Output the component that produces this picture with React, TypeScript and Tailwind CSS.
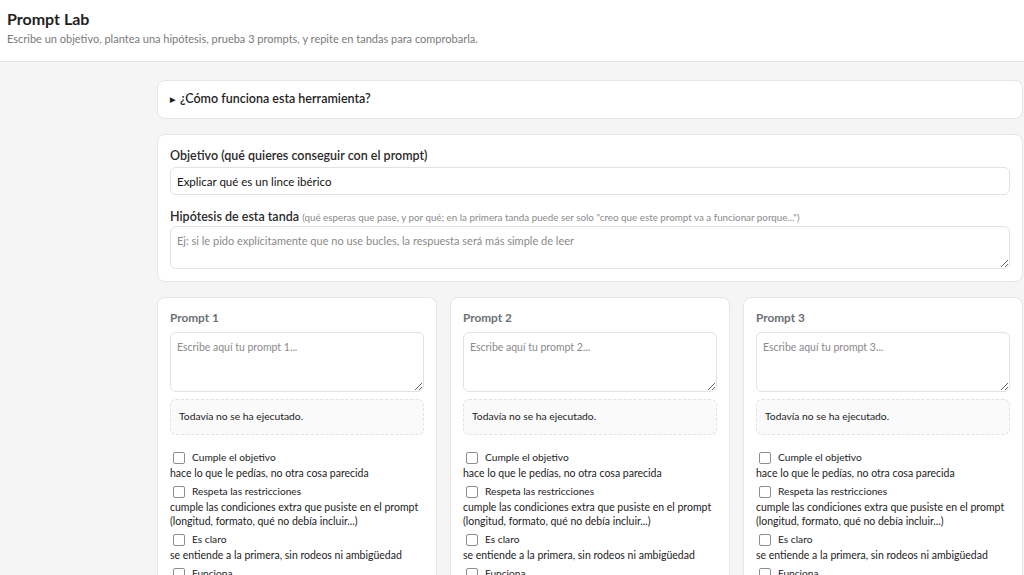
import React from 'react';

const criteria = [
  { label: 'Cumple el objetivo', hint: 'hace lo que le pedías, no otra cosa parecida' },
  {
    label: 'Respeta las restricciones',
    hint: 'cumple las condiciones extra que pusiste en el prompt (longitud, formato, qué no debía incluir...)',
  },
  { label: 'Es claro', hint: 'se entiende a la primera, sin rodeos ni ambigüedad' },
  { label: 'Funciona', hint: 'si hay código, se puede ejecutar sin errores' },
];

const PromptCard: React.FC<{ n: number }> = ({ n }) => {
  return (
    <div className="bg-white border border-[#e6e6e6] rounded-lg px-3 pt-[12px] pb-4">
      <h3 className="text-[11.8px] font-bold text-[#6b6f76] leading-4 mb-[6px]">Prompt {n}</h3>
      <textarea
        className="block w-full h-[60px] rounded-md border border-[#e2e2e2] px-[6px] py-[6px] text-[10.5px] leading-4 text-[#333] placeholder:text-[#8a8a8a] outline-none"
        placeholder={`Escribe aquí tu prompt ${n}...`}
      />
      <div className="mt-[7px] h-9 rounded-md border border-dashed border-[#e2e2e2] bg-[#fafafa] px-2 flex items-center text-[10.3px] text-[#222]">
        Todavía no se ha ejecutado.
      </div>
      <div className="mt-[15px] flex flex-col">
        {criteria.map((c) => (
          <div key={c.label} className="mb-[4px]">
            <label className="flex items-center gap-[7px] pl-[3px] h-4 text-[10.2px] text-[#222]">
              <input
                type="checkbox"
                className="appearance-none w-[12px] h-[12px] border border-[#8f8f8f] rounded-[2px] bg-white m-0"
              />
              {c.label}
            </label>
            <p className="text-[10.5px] leading-[14px] text-[#222]">{c.hint}</p>
          </div>
        ))}
      </div>
    </div>
  );
};

export default function App() {
  return (
    <div className="min-h-screen bg-[#f5f5f5] font-['Segoe_UI','Lato',sans-serif]">
      <header className="bg-white border-b border-[#e3e3e3] px-[7px] pt-[9px] h-[62px]">
        <h1 className="text-[16px] font-bold text-[#1f1f1f] leading-[20px]">Prompt Lab</h1>
        <p className="text-[11px] text-[#7a7a7a] mt-[2px]">
          Escribe un objetivo, plantea una hipótesis, prueba 3 prompts, y repite en tandas para comprobarla.
        </p>
      </header>

      <main className="pl-[157px] pr-px pt-[18px] flex flex-col gap-[15px]">
        <details className="bg-white border border-[#e6e6e6] rounded-lg px-3 h-[39px]">
          <summary className="h-[37px] flex items-center gap-[5px] text-[12.5px] font-semibold text-[#1f1f1f] cursor-pointer list-none">
            <span className="text-[7px]">▶</span>
            ¿Cómo funciona esta herramienta?
          </summary>
        </details>

        <section className="bg-white border border-[#e6e6e6] rounded-lg px-3 pt-[13px] pb-3">
          <label className="block text-[12.5px] font-semibold text-[#2a2a2a] leading-4">
            Objetivo (qué quieres conseguir con el prompt)
          </label>
          <input
            className="mt-[3px] block w-full h-[28px] rounded-md border border-[#e2e2e2] px-[6px] text-[11.5px] text-[#111] outline-none"
            defaultValue="Explicar qué es un lince ibérico"
          />
          <label className="block mt-[14px] text-[12.5px] font-semibold text-[#2a2a2a] leading-4">
            Hipótesis de esta tanda{' '}
            <span className="text-[9.8px] font-normal text-[#8a8a8a]">
              (qué esperas que pase, y por qué; en la primera tanda puede ser solo "creo que este prompt va a funcionar
              porque...")
            </span>
          </label>
          <textarea
            className="mt-px block w-full h-[43px] rounded-md border border-[#e2e2e2] px-[6px] py-[6px] text-[11px] leading-4 placeholder:text-[#8a8a8a] outline-none"
            placeholder="Ej: si le pido explícitamente que no use bucles, la respuesta será más simple de leer"
          />
        </section>

        <div className="grid grid-cols-3 gap-[13px]">
          {[1, 2, 3].map((n) => (
            <PromptCard key={n} n={n} />
          ))}
        </div>
      </main>
    </div>
  );
}
